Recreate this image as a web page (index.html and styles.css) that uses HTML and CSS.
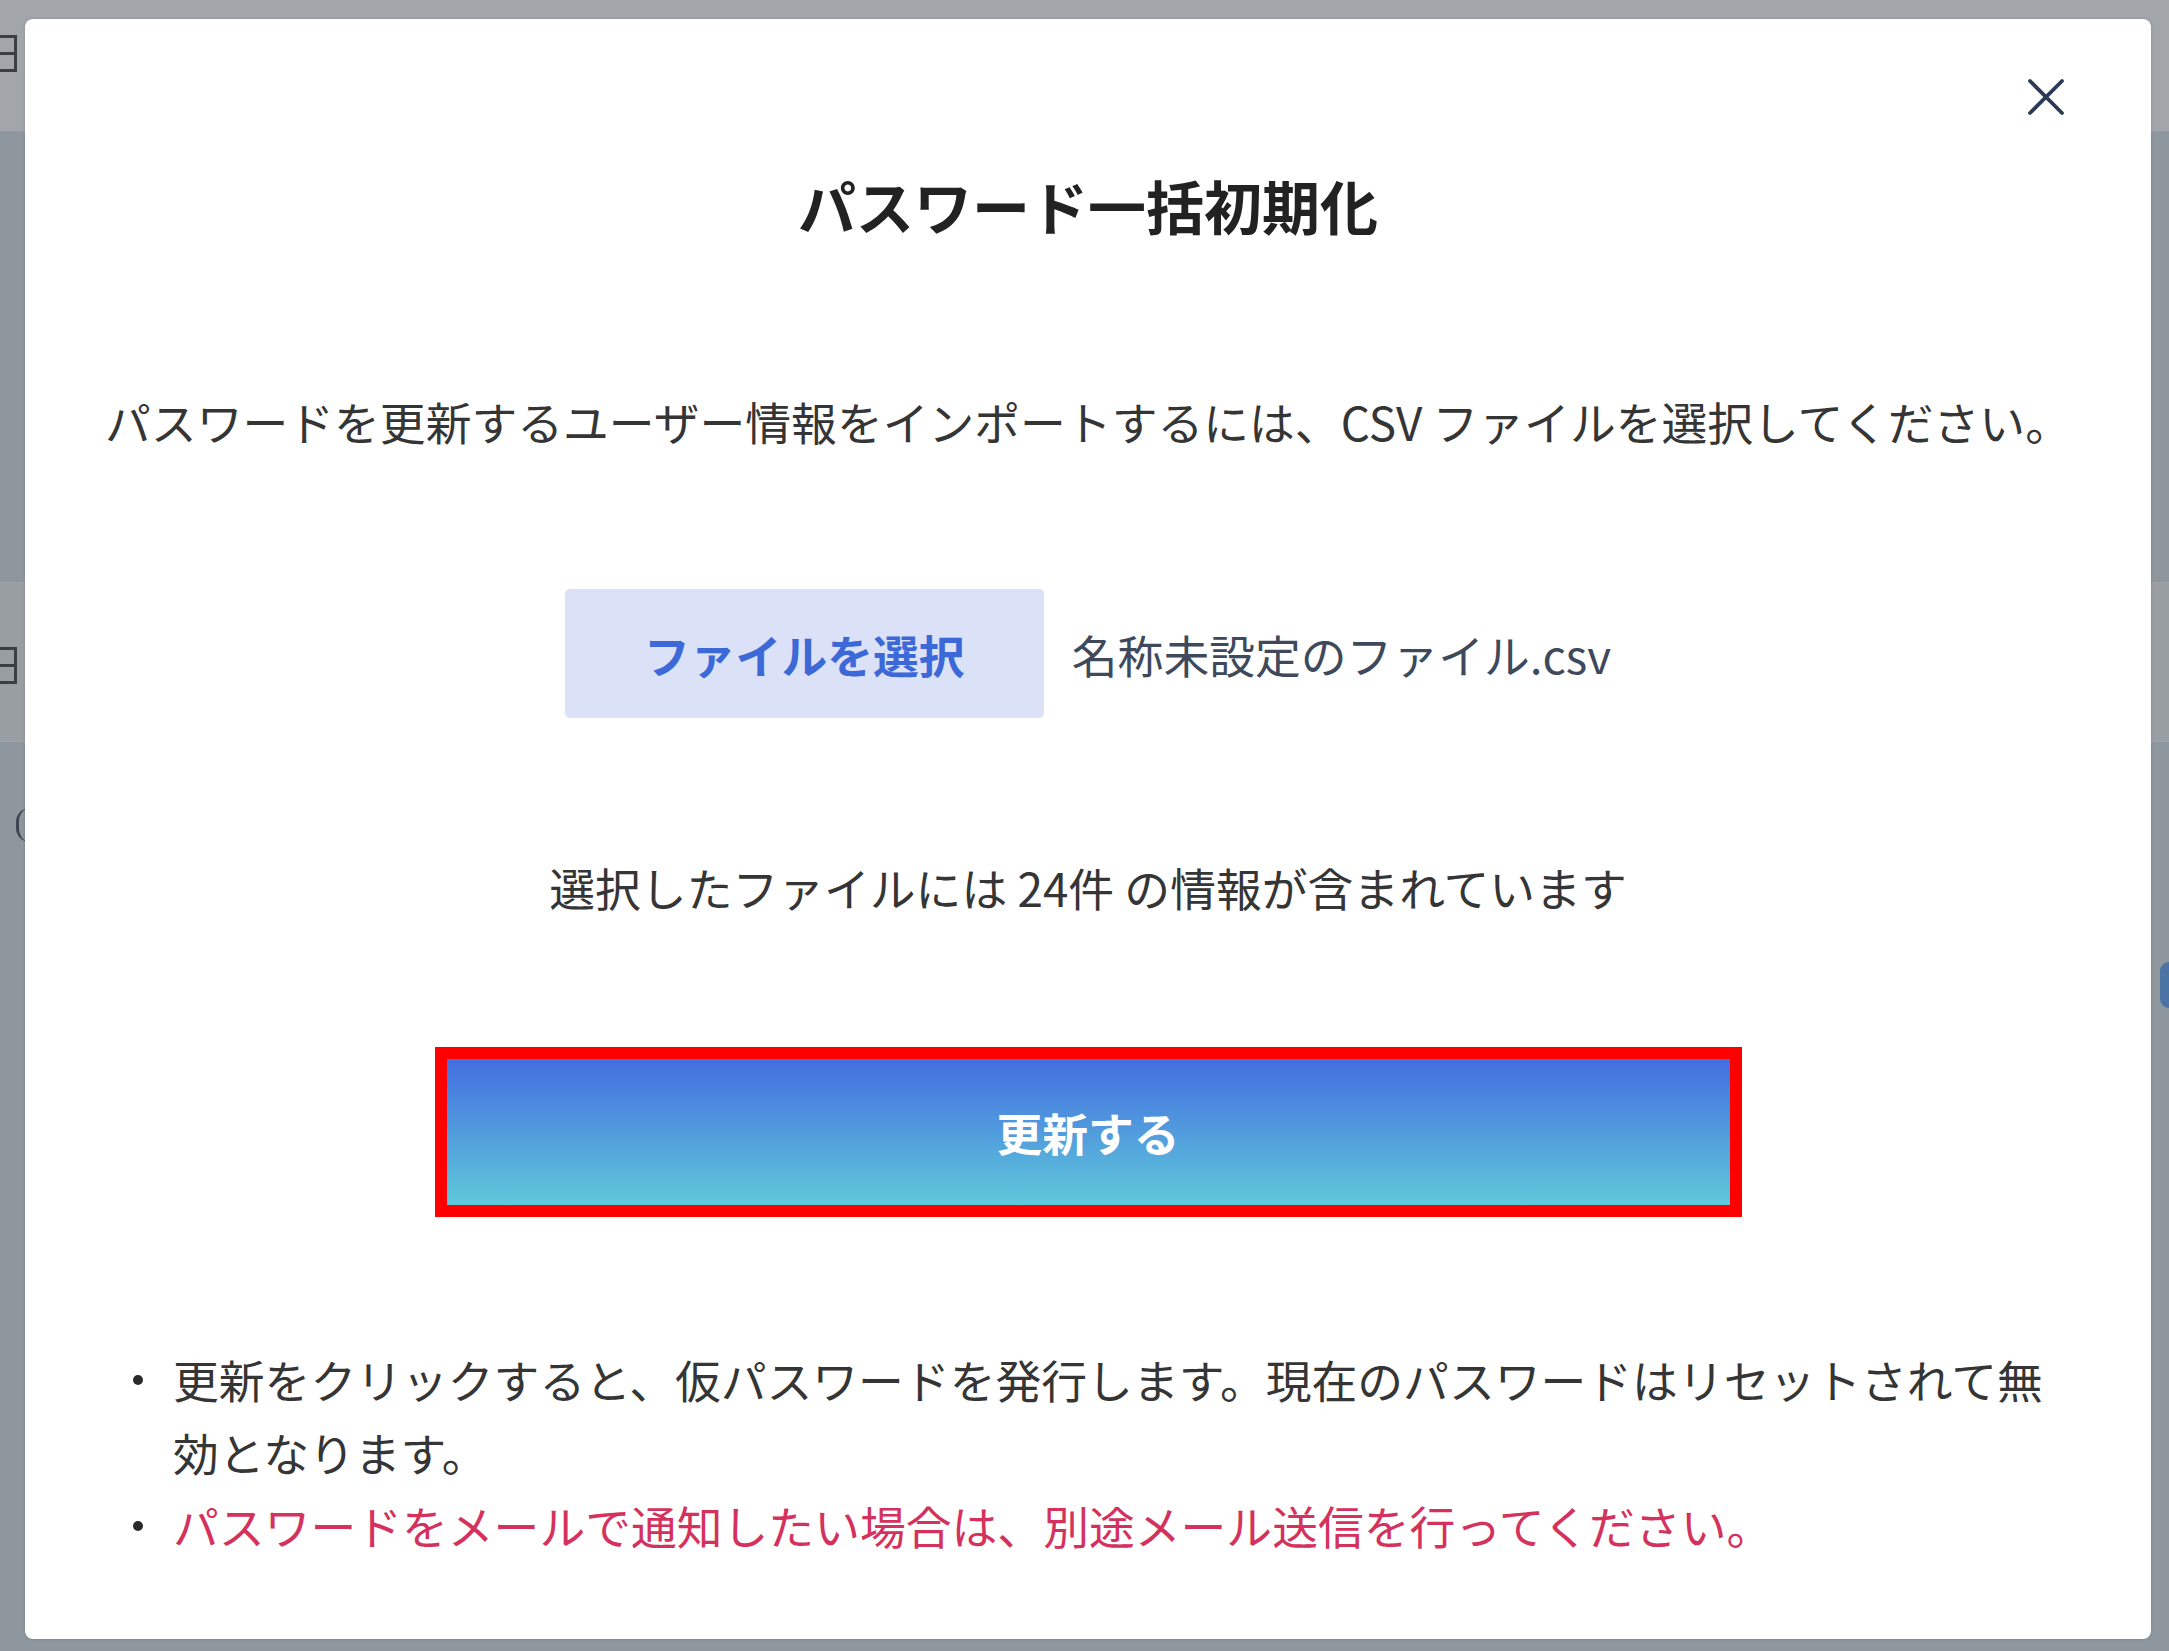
FILE: index.html
```html
<!DOCTYPE html>
<html lang="ja">
<head>
	<meta charset="UTF-8">
	<title>パスワード一括初期化</title>
	<link rel="stylesheet" href="styles.css">
</head>
<body>

<div class="page">
	<div class="page-head"><span class="grid-icon"></span></div>
	<div class="page-gap"></div>
	<div class="page-row"><span class="grid-icon"></span></div>
	<div class="page-rest">
		<span class="paren"></span>
		<span class="blue-tab"></span>
	</div>
</div>

<div class="modal">
	<div class="modal-top">
		<button class="close" aria-label="閉じる">
			<svg width="38" height="38" viewBox="0 0 38 38"><path d="M3 3L35 35M35 3L3 35" stroke="#2b3b53" stroke-width="3.8" stroke-linecap="round" fill="none"/></svg>
		</button>
	</div>
	<h2 class="title">パスワード一括初期化</h2>
	<p class="desc">パスワードを更新するユーザー情報をインポートするには、CSV ファイルを選択してください。</p>
	<div class="file-row">
		<label class="file-btn">ファイルを選択</label>
		<span class="file-name">名称未設定のファイル.csv</span>
	</div>
	<p class="count">選択したファイルには 24件 の情報が含まれています</p>
	<div class="mark">
		<button class="submit">更新する</button>
	</div>
	<ul class="notes">
		<li><span>更新をクリックすると、仮パスワードを発行します。現在のパスワードはリセットされて無効となります。</span></li>
		<li class="warn"><span>パスワードをメールで通知したい場合は、別途メール送信を行ってください。</span></li>
	</ul>
</div>

</body>
</html>
```

FILE: styles.css
```css
html, body {
	margin: 0;
	padding: 0;
}
body {
	width: 2169px;
	height: 1651px;
	overflow: hidden;
	background-color: #8f979e;
	font-family: "Noto Sans CJK JP", "Noto Sans", sans-serif;
	position: relative;
}
p, h2, ul {
	margin: 0;
	padding: 0;
}
li {
	list-style: none;
}

/* dimmed page behind the dialog */
.page-head {
	height: 132px;
	background-color: #a2a6aa;
	border-bottom: 1px solid #979ca1;
	box-sizing: border-box;
	padding-top: 35px;
}
.page-gap {
	height: 450px;
	background-color: #8f979e;
}
.page-row {
	height: 160px;
	background-color: #999ea3;
	border-top: 1px solid #a0a5a9;
	border-bottom: 1px solid #a0a5a9;
	box-sizing: border-box;
	padding-top: 64px;
}
.grid-icon {
	display: block;
	width: 17px;
	height: 37px;
	box-sizing: border-box;
	border: 3px solid #3a3f45;
	border-left: 0;
	background: linear-gradient(#3a3f45, #3a3f45) 0 14px / 100% 3px no-repeat;
}
.page-rest {
	height: 909px;
	display: flex;
	align-items: flex-start;
	justify-content: space-between;
}
.paren {
	width: 14px;
	height: 34px;
	margin: 66px 0 0 16px;
	box-sizing: border-box;
	border-left: 3px solid #3d4550;
	border-radius: 14px 0 0 14px;
}
.blue-tab {
	width: 18px;
	height: 46px;
	margin: 220px -9px 0 0;
	border-radius: 9px;
	background-color: #4b73a3;
}

/* dialog */
.modal {
	position: absolute;
	top: 19px;
	left: 25px;
	width: 2126px;
	height: 1620px;
	background-color: #fff;
	border-radius: 8px;
	box-shadow: 0 0 3px rgba(0,0,0,.15);
	display: flex;
	flex-direction: column;
	align-items: center;
	color: #353535;
}
.modal-top {
	align-self: stretch;
	display: flex;
	justify-content: flex-end;
	padding: 59px 86px 0 0;
}
.close {
	width: 38px;
	height: 38px;
	padding: 0;
	border: 0;
	background: none;
	cursor: pointer;
}
.close svg {
	display: block;
}
.title {
	margin-top: 50px;
	font-size: 58px;
	line-height: 78px;
	font-weight: bold;
	color: #222;
}
.desc {
	margin-top: 143px;
	font-size: 45.8px;
	line-height: 68px;
}
.file-row {
	margin-top: 134px;
	display: flex;
	align-items: center;
	gap: 28px;
}
.file-btn {
	width: 479px;
	height: 129px;
	display: flex;
	align-items: center;
	justify-content: center;
	background-color: #dbe2f7;
	border-radius: 5px;
	font-size: 45.8px;
	font-weight: bold;
	color: #3d68d8;
	cursor: pointer;
}
.file-name {
	font-size: 45.8px;
	color: #3e4a5c;
}
.count {
	margin-top: 135px;
	font-size: 45.8px;
	line-height: 68px;
}
.mark {
	margin-top: 126px;
	border: 12px solid #ff0000;
}
.submit {
	display: block;
	width: 1283px;
	height: 146px;
	border: 0;
	background: linear-gradient(180deg, #436ee0 0%, #5fc9da 100%);
	font-family: inherit;
	font-size: 45.8px;
	font-weight: bold;
	color: #fff;
	cursor: pointer;
}
.notes {
	align-self: stretch;
	margin-top: 126px;
	padding: 0 80px 0 108px;
	font-size: 45.8px;
	line-height: 73px;
}
.notes li {
	display: flex;
}
.notes li::before {
	content: "";
	flex: none;
	width: 10px;
	height: 10px;
	margin: 32px 30px 0 0;
	border-radius: 50%;
	background-color: #2a2a2a;
}
.notes li.warn {
	color: #d4325d;
}
```
